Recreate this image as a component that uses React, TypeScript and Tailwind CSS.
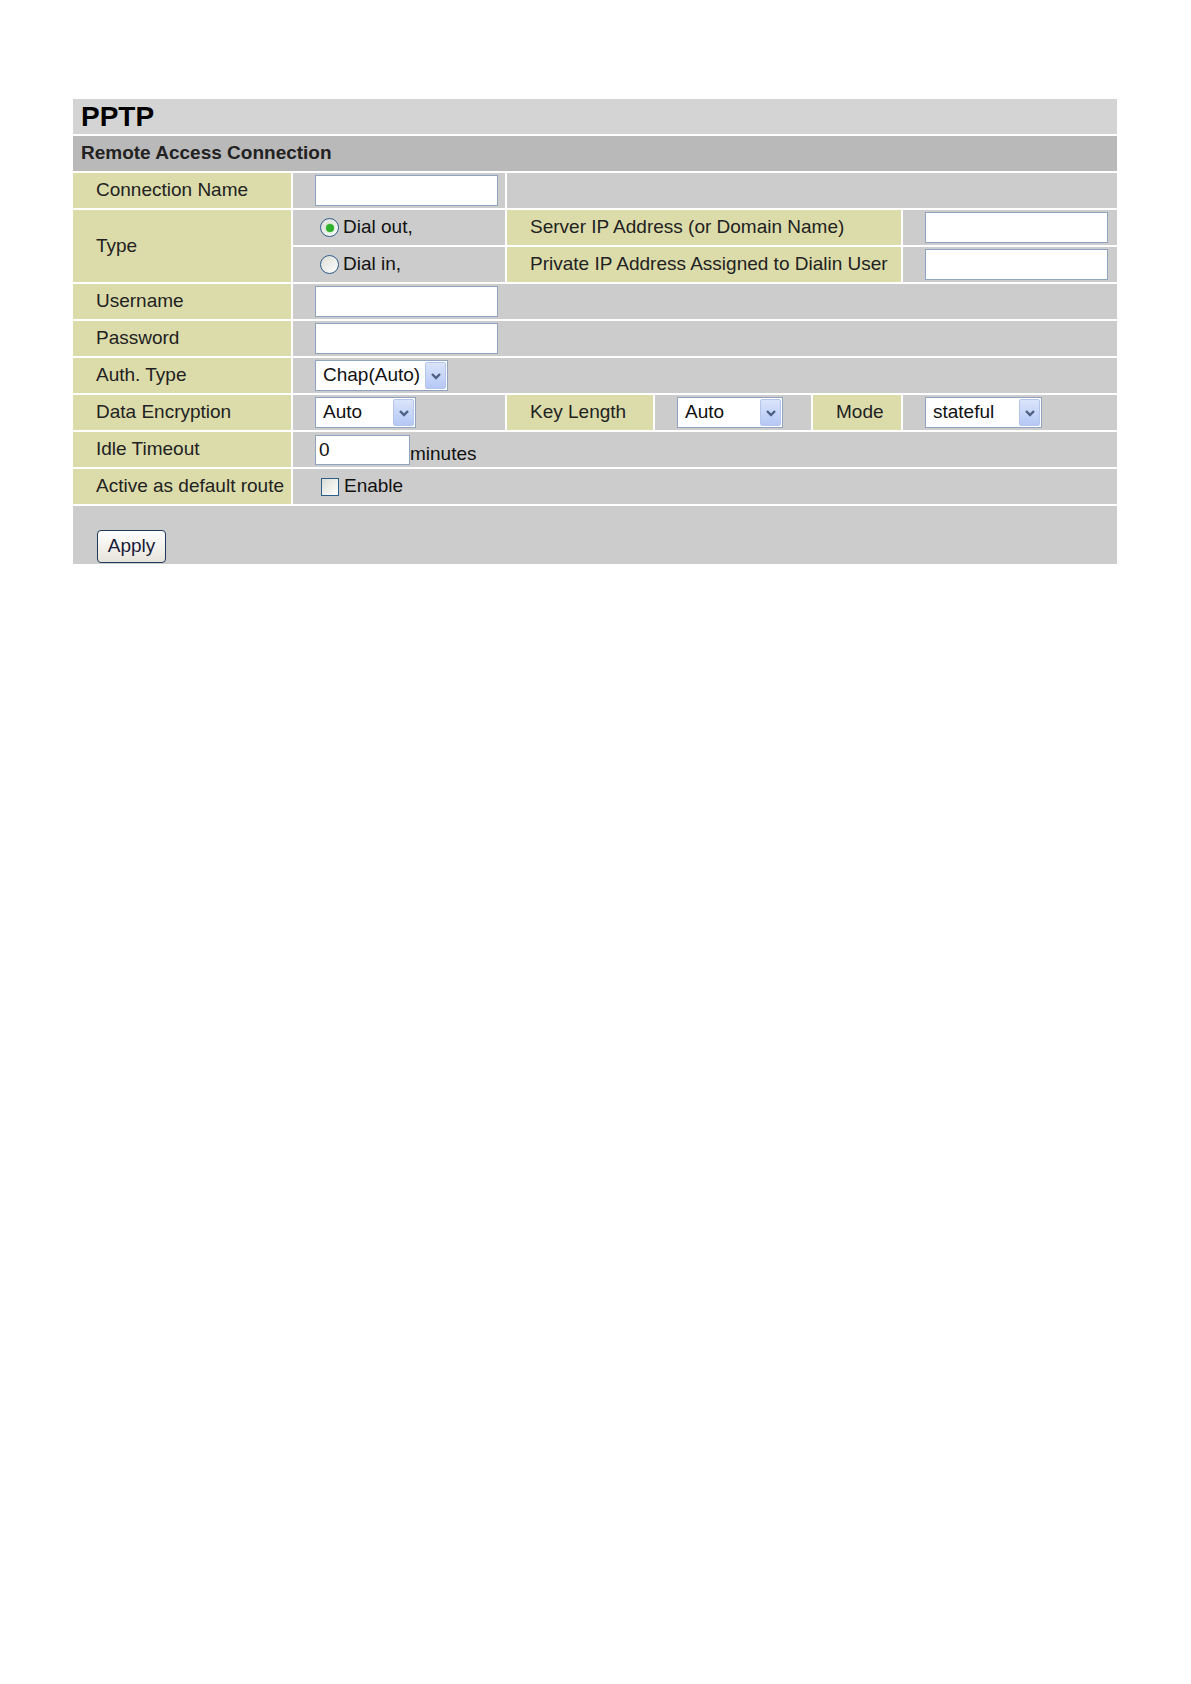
import React from "react";

const label = "bg-[#dcdcab] flex items-center pl-[23px] text-[19px] text-[#222] whitespace-nowrap";
const value = "bg-[#cccccc] flex items-center pl-[22px] text-[19px] text-[#111]";

const TextBox = ({ w, defaultValue }: { w: string; defaultValue?: string }) => (
  <input
    type="text"
    defaultValue={defaultValue}
    className={`${w} h-[31px] border border-[#8ea4c0] bg-white px-[4px] text-[19px] text-[#111] outline-none font-['Liberation_Sans',Arial,sans-serif]`}
  />
);

const Select = ({ w, text }: { w: string; text: string }) => (
  <div className={`${w} h-[31px] border border-[#8ea4c0] bg-white flex items-center justify-between pl-[7px] pr-[1px]`}>
    <span className="text-[19px] text-[#111]">{text}</span>
    <span className="w-[21px] h-[27px] rounded-[2px] border border-[#b6c6ea] bg-gradient-to-b from-[#dae4fb] to-[#b5c8f5] flex items-center justify-center">
      <svg width="12" height="8" viewBox="0 0 12 8">
        <path d="M2 2 L6 6 L10 2" fill="none" stroke="#4d6185" strokeWidth="2.4" />
      </svg>
    </span>
  </div>
);

const Radio = ({ checked }: { checked?: boolean }) => (
  <span className="w-[19px] h-[19px] rounded-full border border-[#2f5d8a] bg-gradient-to-br from-[#dcdcd6] to-white flex items-center justify-center mr-[4px]">
    {checked && <span className="w-[8px] h-[8px] rounded-full bg-[#2fb02f] shadow-[0_0_2px_#7be07b]" />}
  </span>
);

export default function App() {
  return (
    <div className="min-h-[1684px] bg-white pt-[99px] pl-[73px] font-['Liberation_Sans',Arial,sans-serif]">
      <div className="w-[1044px] grid grid-cols-[218px_212px_146px_156px_88px_214px] grid-rows-[repeat(11,35px)_58px] gap-[2px] bg-white">
        {/* Title */}
        <div className="col-span-6 bg-[#d4d4d4] flex items-center pl-[8px] text-[28px] font-bold text-black">PPTP</div>
        <div className="col-span-6 bg-[#b9b9b9] flex items-center pl-[8px] text-[19px] font-bold text-[#222]">
          Remote Access Connection
        </div>

        {/* Connection Name */}
        <div className={label}>Connection Name</div>
        <div className={value}>
          <TextBox w="w-[183px]" />
        </div>
        <div className="col-span-4 bg-[#cccccc]" />

        {/* Type */}
        <div className={`${label} row-span-2`}>Type</div>
        <div className={`${value} pl-[27px]`}>
          <Radio checked />
          Dial out,
        </div>
        <div className={`${label} col-span-3`}>Server IP Address (or Domain Name)</div>
        <div className={value}>
          <TextBox w="w-[183px]" />
        </div>
        <div className={`${value} pl-[27px]`}>
          <Radio />
          Dial in,
        </div>
        <div className={`${label} col-span-3`}>Private IP Address Assigned to Dialin User</div>
        <div className={value}>
          <TextBox w="w-[183px]" />
        </div>

        {/* Username / Password */}
        <div className={label}>Username</div>
        <div className={`${value} col-span-5`}>
          <TextBox w="w-[183px]" />
        </div>
        <div className={label}>Password</div>
        <div className={`${value} col-span-5`}>
          <input
            type="password"
            className="w-[183px] h-[31px] border border-[#8ea4c0] bg-white px-[4px] outline-none"
          />
        </div>

        {/* Auth */}
        <div className={label}>Auth. Type</div>
        <div className={`${value} col-span-5`}>
          <Select w="w-[133px]" text="Chap(Auto)" />
        </div>

        {/* Encryption */}
        <div className={label}>Data Encryption</div>
        <div className={value}>
          <Select w="w-[101px]" text="Auto" />
        </div>
        <div className={label}>Key Length</div>
        <div className={value}>
          <Select w="w-[106px]" text="Auto" />
        </div>
        <div className={`${label} pl-[22px]`}>Mode</div>
        <div className={value}>
          <Select w="w-[117px]" text="stateful" />
        </div>

        {/* Idle */}
        <div className={label}>Idle Timeout</div>
        <div className={`${value} col-span-5 items-end pb-[2px]`}>
          <input
            type="text"
            defaultValue="0"
            className="w-[95px] h-[30px] border border-[#8ea4c0] bg-white px-[3px] text-[19px] text-[#111] outline-none font-['Liberation_Sans',Arial,sans-serif]"
          />
          <span className="leading-[22px]">minutes</span>
        </div>

        {/* Default route */}
        <div className={label}>Active as default route</div>
        <div className={`${value} col-span-5 pl-[28px]`}>
          <span className="w-[18px] h-[18px] border border-[#2f5d8a] bg-gradient-to-br from-[#dcdcd6] to-white mr-[5px]" />
          Enable
        </div>

        {/* Apply */}
        <div className="col-span-6 bg-[#cccccc] flex items-end pl-[24px] pb-[1px]">
          <button className="w-[69px] h-[33px] rounded-[4px] border border-[#1f3a5a] bg-gradient-to-b from-white to-[#e6e4da] text-[19px] text-[#1a1a3a] font-['Liberation_Sans',Arial,sans-serif]">
            Apply
          </button>
        </div>
      </div>
    </div>
  );
}
